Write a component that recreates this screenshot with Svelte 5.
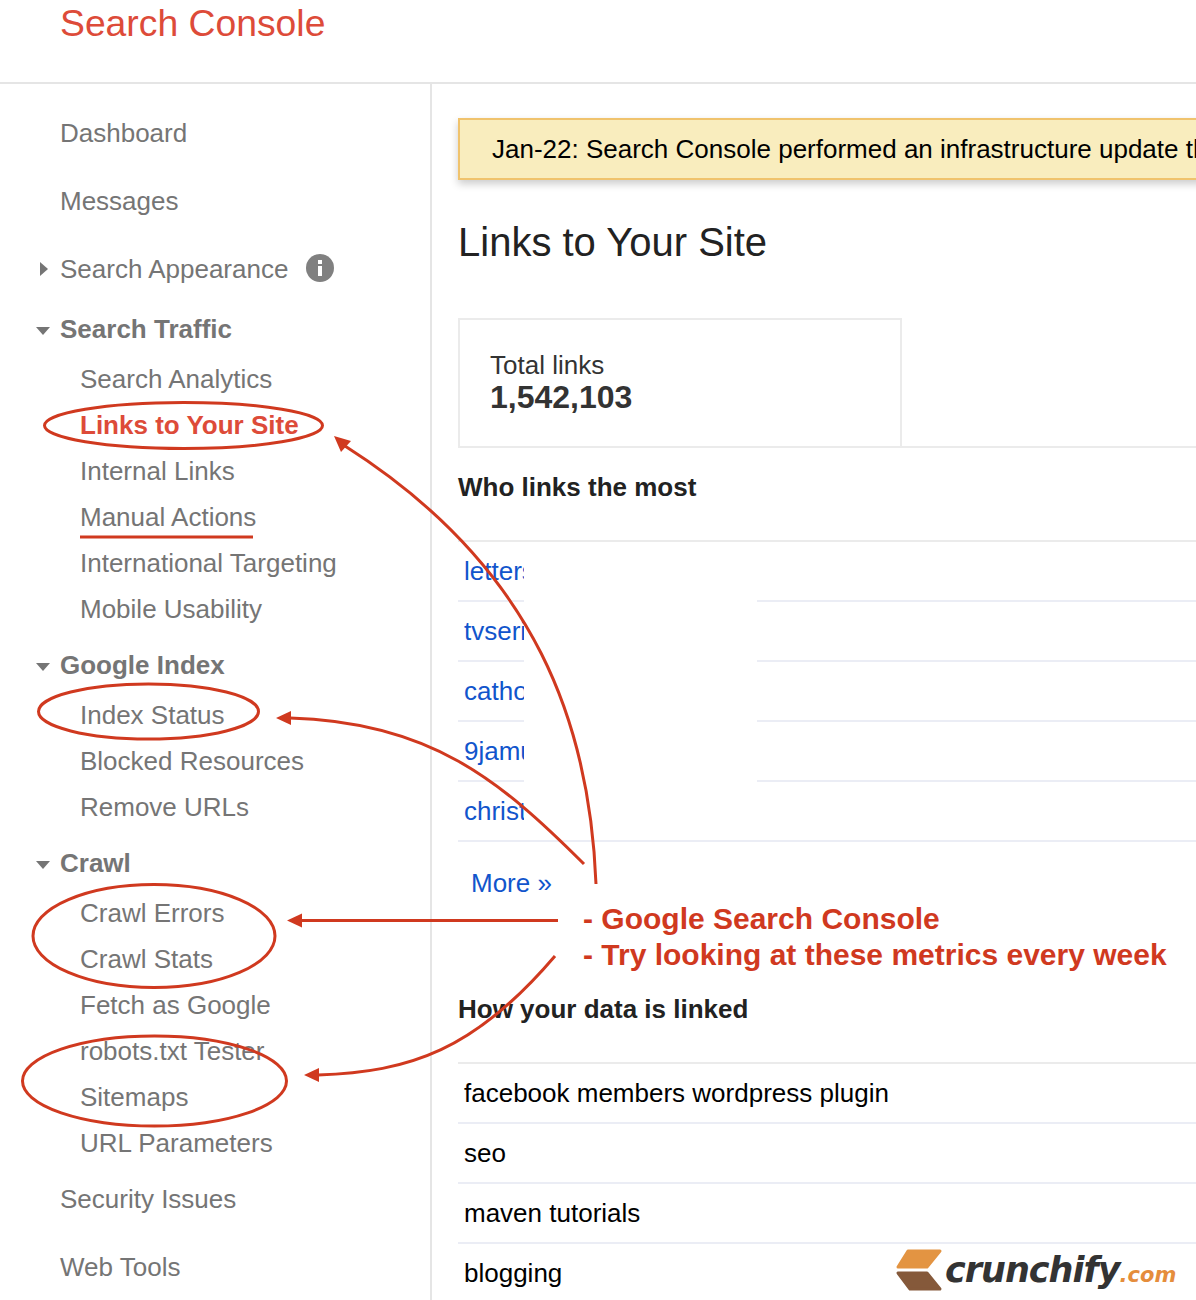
<script lang="ts">
const groups = [
	{ title: 'Search Traffic', items: ['Search Analytics', 'Links to Your Site', 'Internal Links', 'Manual Actions', 'International Targeting', 'Mobile Usability'] },
	{ title: 'Google Index', items: ['Index Status', 'Blocked Resources', 'Remove URLs'] },
	{ title: 'Crawl', items: ['Crawl Errors', 'Crawl Stats', 'Fetch as Google', 'robots.txt Tester', 'Sitemaps', 'URL Parameters'] }
];
const sites = ['letters', 'tvseries', 'catholic', '9jamusic', 'christian'];
const anchors = ['facebook members wordpress plugin', 'seo', 'maven tutorials', 'blogging'];
</script>

<div class="page">
	<header class="top">
		<div class="brand">Search Console</div>
	</header>

	<div class="body">
		<nav class="side">
			<a class="link" href="#dashboard">Dashboard</a>
			<a class="link" href="#messages">Messages</a>
			<a class="link" href="#appearance">
				<span class="tri-right"></span>
				Search Appearance
				<svg class="info" width="28" height="28" viewBox="0 0 28 28">
					<circle cx="14" cy="14" r="14" fill="#808080" />
					<rect x="12" y="6" width="4" height="4" fill="#fff" />
					<rect x="12" y="12" width="4" height="10" fill="#fff" />
				</svg>
			</a>
			{#each groups as group}
				<div class="group">
					<div class="head"><span class="tri-down"></span>{group.title}</div>
					{#each group.items as item}
						<a class="sub" class:active={item === 'Links to Your Site'} href="#item">{item}</a>
					{/each}
				</div>
			{/each}
			<a class="link tail" href="#security">Security Issues</a>
			<a class="link" href="#tools">Web Tools</a>
		</nav>

		<main class="main">
			<div class="notice">Jan-22: Search Console performed an infrastructure update that may cause a change in your data.</div>
			<h1>Links to Your Site</h1>
			<div class="total-row">
				<div class="total">
					<div class="total-label">Total links</div>
					<div class="total-value">1,542,103</div>
				</div>
			</div>
			<h2 class="first">Who links the most</h2>
			<div class="rows sites">
				{#each sites as site}
					<div class="row"><a href="#site">{site}</a></div>
				{/each}
			</div>
			<a class="more" href="#more">More »</a>
			<h2 class="second">How your data is linked</h2>
			<div class="rows anchors">
				{#each anchors as anchor}
					<div class="row">{anchor}</div>
				{/each}
			</div>
		</main>
	</div>

	<!-- pasted-over patch that hides the middle of the table -->
	<div class="patch"></div>

	<svg class="marks" width="1196" height="1300" viewBox="0 0 1196 1300">
		<g fill="none" stroke="#d0391f" stroke-width="3">
			<ellipse cx="183.500" cy="425.500" rx="139" ry="23" />
			<path d="M80 537H253" />
			<ellipse cx="148.500" cy="711.500" rx="110" ry="27.500" />
			<ellipse cx="154" cy="936" rx="121" ry="51.500" />
			<ellipse cx="154.500" cy="1081" rx="132" ry="45" />
			<path d="M596 884C590 730 540 570 345 446" />
			<path d="M584 864C500 780 430 722 290 718" />
			<path d="M558 920.500H300" />
			<path d="M555 956C475 1050 410 1072 318 1075" />
		</g>
		<g fill="#d0391f">
			<path d="M334 436L351 441L341 452Z" />
			<path d="M276 718L291 711V725Z" />
			<path d="M287 920.500L302 913.500V927.500Z" />
			<path d="M304 1075L319 1068V1082Z" />
		</g>
	</svg>

	<div class="note">
		<div>- Google Search Console</div>
		<div>- Try looking at these metrics every week</div>
	</div>

	<div class="logo">
		<svg width="48" height="44" viewBox="0 0 48 44">
			<path d="M13 3H45L32 19H3Z" fill="#e39442" stroke="#e39442" stroke-width="3" stroke-linejoin="round" />
			<path d="M3 25H32L45 41H15Z" fill="#85593a" stroke="#85593a" stroke-width="3" stroke-linejoin="round" />
		</svg>
		<span class="word">crunchify<span class="dotcom">.com</span></span>
	</div>
</div>

<style>
:global(body) {
	margin: 0;
	background: #fff;
}
.page {
	position: relative;
	width: 1196px;
	height: 1300px;
	overflow: hidden;
	font-family: "Liberation Sans", Arial, sans-serif;
	font-size: 26px;
	color: #000;
}
a {
	text-decoration: none;
}
.top {
	height: 82px;
	border-bottom: 2px solid #e5e5e5;
	box-sizing: content-box;
}
.brand {
	padding-left: 60px;
	font-size: 37.300px;
	line-height: 46px;
	color: #dd4b39;
}
.body {
	display: flex;
	height: 1216px;
}
.side {
	flex: none;
	width: 430px;
	border-right: 2px solid #e5e5e5;
	padding-top: 15px;
	box-sizing: content-box;
}
.link {
	display: flex;
	align-items: center;
	height: 68px;
	padding-left: 60px;
	position: relative;
	color: #757575;
}
.tail {
	margin-top: -1px;
}
.tri-right {
	position: absolute;
	left: 40px;
	top: 27px;
	border-left: 8px solid #757575;
	border-top: 7px solid transparent;
	border-bottom: 7px solid transparent;
}
.info {
	margin-left: 18px;
	margin-top: -2px;
}
.group + .group {
	margin-top: 7px;
}
.head {
	height: 53px;
	line-height: 53px;
	padding-left: 60px;
	position: relative;
	font-weight: bold;
	color: #757575;
}
.tri-down {
	position: absolute;
	left: 36px;
	top: 24px;
	border-top: 8px solid #757575;
	border-left: 7px solid transparent;
	border-right: 7px solid transparent;
}
.sub {
	display: block;
	height: 46px;
	line-height: 46px;
	padding-left: 80px;
	color: #757575;
}
.sub.active {
	color: #dd4b39;
	font-weight: bold;
}
.main {
	flex: 1;
	min-width: 0;
	padding: 34px 0 0 26px;
}
.notice {
	width: 1000px;
	height: 58px;
	line-height: 58px;
	padding-left: 32px;
	background: #f9edbe;
	border: 2px solid #f0c36d;
	box-shadow: 0 4px 8px rgba(0, 0, 0, 0.2);
	white-space: nowrap;
}
h1 {
	margin: 37px 0 0;
	font-size: 40px;
	font-weight: normal;
	line-height: 50px;
	color: #222;
}
.total-row {
	margin-top: 51px;
	border-bottom: 2px solid #ebebeb;
}
.total {
	box-sizing: border-box;
	width: 444px;
	height: 128px;
	border: 2px solid #ebebeb;
	border-bottom: none;
	padding: 30px 0 0 30px;
	color: #333;
}
.total-label {
	line-height: 30px;
}
.total-value {
	font-size: 32px;
	font-weight: bold;
	line-height: 34px;
}
h2 {
	margin: 0;
	font-size: 26px;
	line-height: 30px;
	color: #222;
}
.first {
	margin-top: 24px;
}
.second {
	margin-top: 96px;
}
.rows {
	border-top: 2px solid #ebebeb;
}
.sites {
	margin-top: 38px;
}
.anchors {
	margin-top: 38px;
}
.row {
	box-sizing: border-box;
	height: 60px;
	line-height: 58px;
	padding-left: 6px;
	border-bottom: 2px solid #ebedf5;
	white-space: nowrap;
}
.row a,
.more {
	color: #1155cc;
}
.more {
	display: block;
	margin: 26px 0 0 13px;
	line-height: 30px;
}
.patch {
	position: absolute;
	left: 524px;
	top: 543px;
	width: 233px;
	height: 297px;
	background: #fff;
}
.marks {
	position: absolute;
	left: 0;
	top: 0;
}
.note {
	position: absolute;
	left: 583px;
	top: 901px;
	font-size: 30px;
	font-weight: bold;
	line-height: 36px;
	color: #d0391f;
	white-space: nowrap;
}
.logo {
	position: absolute;
	left: 895px;
	top: 1248px;
	display: flex;
	align-items: flex-start;
	gap: 2px;
}
.word {
	font-family: "DejaVu Sans", sans-serif;
	font-weight: bold;
	font-style: italic;
	font-size: 35px;
	line-height: 44px;
	color: #333;
	letter-spacing: -1px;
}
.dotcom {
	font-size: 21px;
	color: #e58d3c;
	letter-spacing: 0;
}
</style>
